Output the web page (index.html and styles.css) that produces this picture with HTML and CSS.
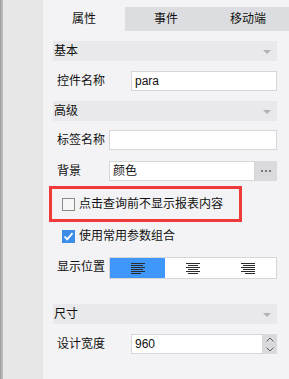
FILE: index.html
```html
<!DOCTYPE html>
<html lang="zh-CN">

<head>
    <meta charset="UTF-8">
    <meta name="viewport" content="width=device-width, initial-scale=1.0">
    <title>控件属性</title>
    <link rel="stylesheet" href="styles.css">
</head>

<body>
    <div class="side-strip"></div>

    <div class="panel">
        <div class="tabs">
            <div class="tab active">属性</div>
            <div class="tab">事件</div>
            <div class="tab">移动端</div>
        </div>

        <div class="content">
            <div class="section-bar">
                <span>基本</span>
                <span class="arrow"></span>
            </div>
            <div class="row gap-10">
                <label class="label wide">控件名称</label>
                <div class="field">para</div>
            </div>

            <div class="section-bar gap-10">
                <span>高级</span>
                <span class="arrow"></span>
            </div>
            <div class="row gap-9">
                <label class="label">标签名称</label>
                <div class="field"></div>
            </div>
            <div class="row gap-11">
                <label class="label">背景</label>
                <div class="field">颜色</div>
                <div class="more-btn"><i></i><i></i><i></i></div>
            </div>

            <div class="highlight">
                <span class="checkbox"></span>
                <span>点击查询前不显示报表内容</span>
            </div>

            <div class="check-row">
                <svg class="checkbox-on" width="13" height="13" viewBox="0 0 13 13">
                    <rect width="13" height="13" fill="#3b8ee8" />
                    <polyline points="2.5,6.5 5.2,9.4 10.5,3.2" fill="none" stroke="#fff" stroke-width="1.8" />
                </svg>
                <span>使用常用参数组合</span>
            </div>

            <div class="row seg-row">
                <label class="label">显示位置</label>
                <div class="segmented">
                    <div class="seg selected">
                        <svg width="14" height="11" viewBox="0 0 14 11">
                            <g fill="#2b2b2b">
                                <rect x="0" y="0" width="14" height="1" />
                                <rect x="0" y="2" width="12" height="1" />
                                <rect x="0" y="4" width="14" height="1" />
                                <rect x="0" y="6" width="12" height="1" />
                                <rect x="0" y="8" width="14" height="1" />
                                <rect x="0" y="10" width="10" height="1" />
                            </g>
                        </svg>
                    </div>
                    <div class="seg">
                        <svg width="14" height="11" viewBox="0 0 14 11">
                            <g fill="#2b2b2b">
                                <rect x="0" y="0" width="14" height="1" />
                                <rect x="2" y="2" width="10" height="1" />
                                <rect x="0" y="4" width="14" height="1" />
                                <rect x="2" y="6" width="10" height="1" />
                                <rect x="0" y="8" width="14" height="1" />
                                <rect x="2" y="10" width="10" height="1" />
                            </g>
                        </svg>
                    </div>
                    <div class="seg">
                        <svg width="14" height="11" viewBox="0 0 14 11">
                            <g fill="#2b2b2b">
                                <rect x="0" y="0" width="14" height="1" />
                                <rect x="2" y="2" width="12" height="1" />
                                <rect x="0" y="4" width="14" height="1" />
                                <rect x="2" y="6" width="12" height="1" />
                                <rect x="0" y="8" width="14" height="1" />
                                <rect x="4" y="10" width="10" height="1" />
                            </g>
                        </svg>
                    </div>
                </div>
            </div>

            <div class="section-bar size-bar">
                <span>尺寸</span>
                <span class="arrow"></span>
            </div>
            <div class="row gap-10">
                <label class="label wide">设计宽度</label>
                <div class="field">960</div>
                <div class="spinner">
                    <svg width="8" height="5" viewBox="0 0 8 5">
                        <polyline points="0.5,4.5 4,1 7.5,4.5" fill="none" stroke="#5a5a5a" stroke-width="1" />
                    </svg>
                    <svg width="8" height="5" viewBox="0 0 8 5">
                        <polyline points="0.5,0.5 4,4 7.5,0.5" fill="none" stroke="#5a5a5a" stroke-width="1" />
                    </svg>
                </div>
            </div>
        </div>
    </div>
</body>

</html>
```

FILE: styles.css
```css
html,
body {
    margin: 0;
    height: 100%;
}

body {
    display: flex;
    width: 289px;
    height: 379px;
    overflow: hidden;
    font-family: "Liberation Sans", "Noto Sans CJK SC", sans-serif;
    font-size: 12px;
    line-height: 20px;
    color: #111;
    background-color: #f3f3f5;
}

.side-strip {
    width: 43px;
    flex-shrink: 0;
    background: linear-gradient(to right, #9c9c9c 0, #c4c4c4 3px, #e7e7e7 3px, #e7e7e7 100%);
}

.panel {
    flex: 1;
    padding-top: 7px;
    background-color: #f3f3f5;
}

/* tabs */
.tabs {
    display: flex;
    height: 24px;
}

.tab {
    flex: 1;
    text-align: center;
    line-height: 24px;
    background-color: #dcdde0;
    color: #111;
}

.tab.active {
    background-color: #f3f3f5;
}

.content {
    padding: 10px 12px 0 10px;
}

/* section header bars */
.section-bar {
    display: flex;
    justify-content: space-between;
    align-items: center;
    height: 20px;
    padding-left: 1px;
    background-color: #e9e9eb;
}

.arrow {
    width: 0;
    height: 0;
    margin: 2px 6px 0 0;
    border-left: 4px solid transparent;
    border-right: 4px solid transparent;
    border-top: 4px solid #b2b2b4;
}

.size-bar {
    margin-top: 25px;
}

/* rows */
.row {
    display: flex;
    height: 20px;
}

.gap-9 {
    margin-top: 9px;
}

.gap-10 {
    margin-top: 10px;
}

.gap-11 {
    margin-top: 11px;
}

.label {
    width: 52px;
    padding-left: 4px;
    flex-shrink: 0;
    line-height: 20px;
}

.label.wide {
    width: 74px;
}

.field {
    flex: 1;
    height: 20px;
    box-sizing: border-box;
    padding-left: 3px;
    line-height: 18px;
    background-color: #fff;
    border: 1px solid #d6d6d8;
}

.more-btn {
    display: flex;
    align-items: center;
    justify-content: center;
    gap: 2px;
    width: 22px;
    background-color: #dadadc;
}

.more-btn i {
    width: 2px;
    height: 2px;
    background-color: #7a7a7a;
}

.spinner {
    display: flex;
    flex-direction: column;
    align-items: center;
    justify-content: center;
    gap: 5px;
    width: 14px;
    background-color: #d9d9db;
}

.spinner svg {
    display: block;
}

/* checkboxes */
.highlight {
    display: flex;
    align-items: center;
    gap: 4px;
    width: 193px;
    height: 36px;
    box-sizing: border-box;
    margin: 5px 0 0 -4px;
    padding-left: 10px;
    border: 3px solid #ef3a3a;
}

.checkbox {
    width: 13px;
    height: 13px;
    box-sizing: border-box;
    border: 1px solid #8a8a8a;
    background-color: #f7f7f7;
}

.check-row {
    display: flex;
    align-items: center;
    gap: 4px;
    height: 20px;
    margin-top: 4px;
    padding-left: 9px;
}

.checkbox-on {
    display: block;
}

/* alignment buttons */
.seg-row {
    height: 22px;
    margin-top: 11px;
}

.segmented {
    flex: 1;
    display: flex;
    box-sizing: border-box;
    border: 1px solid #d6d6d8;
    background-color: #fff;
}

.seg {
    flex: 1;
    display: flex;
    align-items: center;
    justify-content: center;
}

.seg svg {
    display: block;
}

.seg.selected {
    background-color: #3f97f9;
}
```
